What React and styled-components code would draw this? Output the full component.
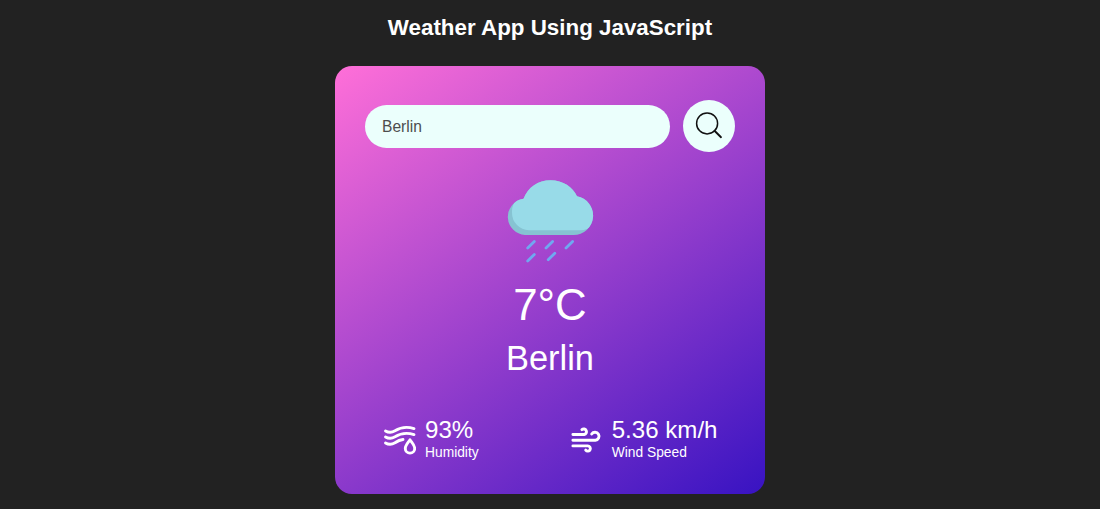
import React from "react";
import styled, { createGlobalStyle } from "styled-components";

const GlobalStyle = createGlobalStyle`
  * { margin: 0; padding: 0; box-sizing: border-box; }
  body {
    background: #222;
    color: #fff;
    font-family: "Liberation Sans", Arial, sans-serif;
    overflow: hidden;
  }
`;

const Page = styled.main`
  height: 509px;
  display: flex;
  flex-direction: column;
  align-items: center;
`;

const Title = styled.h1`
  margin-top: 15px;
  height: 51px;
  font-size: 22.37px;
  line-height: 26px;
  font-weight: 700;
`;

const Card = styled.section`
  width: 430px;
  height: 428px;
  padding: 34px 30px 0;
  border-radius: 17px;
  background: linear-gradient(145deg, #ff6fd8, #3813c2);
  text-align: center;
`;

const Search = styled.form`
  display: flex;
  align-items: center;
  justify-content: space-between;
  height: 52px;
`;

const SearchInput = styled.input`
  width: 305px;
  height: 43px;
  padding: 1px 17px 0;
  border: 0;
  outline: 0;
  border-radius: 26px;
  background: #ebfffc;
  color: #4d4d4d;
  font: 15.6px "Liberation Sans", Arial, sans-serif;
`;

const SearchButton = styled.button`
  width: 52px;
  height: 52px;
  border: 0;
  border-radius: 50%;
  background: #ebfffc;
  display: flex;
  align-items: center;
  justify-content: center;
`;

const WeatherIcon = styled.svg`
  display: block;
  width: 100px;
  height: 100px;
  margin: 18px auto 0;
`;

const Temperature = styled.p`
  margin-top: 10px;
  font-size: 43.8px;
  line-height: 50px;
`;

const City = styled.h2`
  margin-top: 8px;
  font-size: 34.4px;
  line-height: 40px;
  font-weight: 400;
`;

const Details = styled.div`
  display: flex;
  justify-content: space-between;
  margin-top: 38px;
  padding: 0 17.5px 0 18px;
`;

const Detail = styled.div`
  display: flex;
  align-items: center;
  gap: 9px;
  text-align: left;
`;

const DetailIcon = styled.svg`
  width: 33px;
  height: 33px;
  margin-top: 1px;
  fill: none;
  stroke: #fff;
  stroke-width: 2.9;
  stroke-linecap: round;
  stroke-linejoin: round;
`;

const Value = styled.p`
  font-size: 24.1px;
  line-height: 28px;
`;

const Label = styled.p`
  font-size: 13.8px;
  line-height: 18px;
  margin-bottom: -2px;
`;

const SearchGlyph = () => (
  <svg width="28" height="28" viewBox="0 0 28 28" fill="none" stroke="#111" strokeWidth="1.5" strokeLinecap="round">
    <circle cx="12.1" cy="11.4" r="10.5" />
    <path d="M19.5 18.8 26 25.2" strokeWidth="1.9" />
  </svg>
);

const RainCloud = () => (
  <WeatherIcon viewBox="0 0 100 100">
    <clipPath id="cloud">
      <path d="M25 65A18.2 18.2 0 0 1 23.5 28.8C28 17 38 10.2 50.500 10.200C63 10.200 73 17 77 26.300A19.500 19.500 0 0 1 73.500 65Z" />
    </clipPath>
    <g clipPath="url(#cloud)">
      <rect width="94" height="100" fill="#86c3d2" />
      <path d="M94 0V54Q88 60.3 80 60.3H29A17.4 17.4 0 0 1 12 43Q11.5 33 19 28L20 0Z" fill="#98dbe8" />
    </g>
    <path
      d="M27.7 78 34.3 71.4M46 78 52.6 71.4M66 78 72.6 71.4M27.7 91 34.3 84.4M48.2 89.8 54.8 83.2"
      fill="none" stroke="#70a8f0" strokeWidth="2.8" strokeLinecap="round"
    />
  </WeatherIcon>
);

const HumidityGlyph = () => (
  <DetailIcon viewBox="0 0 33 33">
    <path d="M2.5 8.9C5 10.4 8.5 10.8 12 8.8C17 5.6 22 3.8 31 6.6M2.5 14.900C5 16.400 8.500 16.800 12 14.800C17 11.600 22 9.800 31 12.600M2.500 20.900C5 22.400 8.500 22.800 12 20.800C14.500 19 16.500 17.800 20 17.500" />
    <path d="M27 17.800C25 20.800 22.300 23.500 22.300 26.400A4.700 4.700 0 0 0 31.700 26.400C31.700 23.500 29 20.800 27 17.800Z" />
  </DetailIcon>
);

const WindGlyph = () => (
  <DetailIcon viewBox="0.6 -0.6 33 33">
    <path d="M3.500 11.900H14.800A2.800 2.800 0 1 0 12.500 7M3.500 17.600H26A4 4 0 1 0 22.300 11.400M3.500 23.300H18.200A2.600 2.600 0 1 1 16.300 27.500" />
  </DetailIcon>
);

export default function App() {
  return (
    <>
      <GlobalStyle />
      <Page>
        <Title>Weather App Using JavaScript</Title>
        <Card>
          <Search onSubmit={(e) => e.preventDefault()}>
            <SearchInput defaultValue="Berlin" spellCheck={false} aria-label="City" />
            <SearchButton aria-label="Search"><SearchGlyph /></SearchButton>
          </Search>
          <RainCloud />
          <Temperature>7°C</Temperature>
          <City>Berlin</City>
          <Details>
            <Detail>
              <HumidityGlyph />
              <div><Value>93%</Value><Label>Humidity</Label></div>
            </Detail>
            <Detail>
              <WindGlyph />
              <div><Value>5.36 km/h</Value><Label>Wind Speed</Label></div>
            </Detail>
          </Details>
        </Card>
      </Page>
    </>
  );
}
